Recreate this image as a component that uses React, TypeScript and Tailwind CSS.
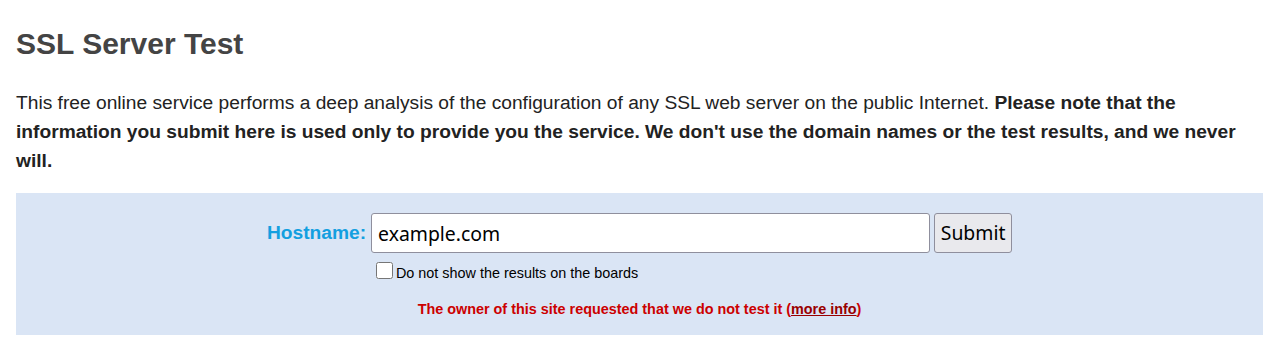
import React from 'react';

const App: React.FC = () => {
  return (
    <div className="min-h-screen bg-white px-4 font-['Liberation_Sans',Arial,sans-serif]">
      {/* Title */}
      <h1 className="pt-[26px] text-[30px] leading-[36px] font-bold text-[#444444]">SSL Server Test</h1>

      {/* Intro */}
      <p className="mt-[26px] text-[19.2px] leading-[29px] text-[#222222]">
        This free online service performs a deep analysis of the configuration of any SSL web server on the public
        Internet. <b>Please note that the information you submit here is used only to provide you the service. We don't
        use the domain names or the test results, and we never will.</b>
      </p>

      {/* Form box */}
      <div className="mt-[18px] h-[142px] bg-[#dae5f5] pt-[20px]">
        <div className="flex justify-center">
          <div>
            <div className="flex items-center">
              <label className="mr-[5px] text-[19.2px] font-bold text-[#139fe0]">Hostname:</label>
              <input
                type="text"
                defaultValue="example.com"
                className="h-[40px] w-[559px] rounded-[3px] border border-[#8f8f9d] bg-white px-[6px] font-['Noto_Sans',sans-serif] text-[19.4px] text-black outline-none"
              />
              <button className="ml-[4px] h-[40px] w-[78px] rounded-[3px] border border-[#8f8f9d] bg-[#e9e9ed] font-['Noto_Sans',sans-serif] text-[19.4px] text-black">
                Submit
              </button>
            </div>
            <div className="ml-[109px] mt-[9px] flex items-start">
              <input type="checkbox" className="m-0 h-[17px] w-[17px]" />
              <span className="ml-[3px] mt-[1px] text-[14.4px] text-black">Do not show the results on the boards</span>
            </div>
          </div>
        </div>
        <p className="mt-[14px] text-center text-[14.4px] font-bold text-[#cc0000]">
          The owner of this site requested that we do not test it (
          <a href="#" className="text-[#990000] underline">
            more info
          </a>
          )
        </p>
      </div>
    </div>
  );
};

export default App;
